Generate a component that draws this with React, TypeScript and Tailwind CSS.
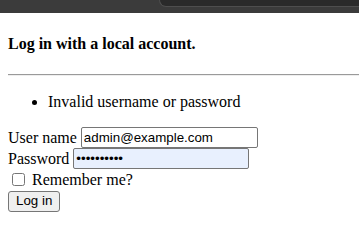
import React from "react";

export default function App() {
  return (
    <div className="w-[359px] h-[227px] overflow-hidden bg-white text-black font-['Liberation_Serif',serif] text-[16px] leading-[18px]">
      <div className="h-[13px] bg-[#3b3b3b] flex justify-end">
        <div className="w-[200px] h-[7px] bg-[#2a2a2a] rounded-bl-[8px] border-l border-b border-[#4e4e4e]" />
      </div>
      <div className="pl-2">
        <h4 className="mt-[21px] font-bold text-[16px] leading-[19px]">Log in with a local account.</h4>
        <hr className="mt-[21px] border-t border-t-[#9a9a9a] border-b border-b-[#eeeeee]" />
        <ul className="mt-[17px] pl-10 list-disc">
          <li className="leading-[18px]">Invalid username or password</li>
        </ul>
        <form className="mt-[16px] flex flex-col">
          <div className="flex items-center h-[21px]">
            <label className="mr-[4px]">User name</label>
            <input
              type="text"
              readOnly
              value="admin@example.com"
              className="w-[177px] h-[21px] border border-[#767676] rounded-[2px] px-[2px] text-[13.33px] font-['Liberation_Sans',Arial,sans-serif] outline-none"
            />
          </div>
          <div className="flex items-center h-[21px]">
            <label className="mr-[4px]">Password</label>
            <input
              type="password"
              readOnly
              value="1234567890"
              className="w-[176px] h-[21px] border border-[#767676] rounded-[2px] px-[2px] bg-[#e8f0fe] text-[13.33px] font-['Liberation_Sans',Arial,sans-serif] outline-none"
            />
          </div>
          <div className="flex items-center h-[21px]">
            <input type="checkbox" className="m-[3px_3px_3px_4px] w-[13px] h-[13px]" />
            <label className="ml-[4px]">Remember me?</label>
          </div>
          <div className="flex items-center h-[22px]">
            <button
              type="button"
              className="h-[21px] px-[7px] bg-[#efefef] border border-[#767676] rounded-[3px] text-[13.33px] font-['Liberation_Sans',Arial,sans-serif] leading-none"
            >
              Log in
            </button>
          </div>
        </form>
      </div>
    </div>
  );
}
